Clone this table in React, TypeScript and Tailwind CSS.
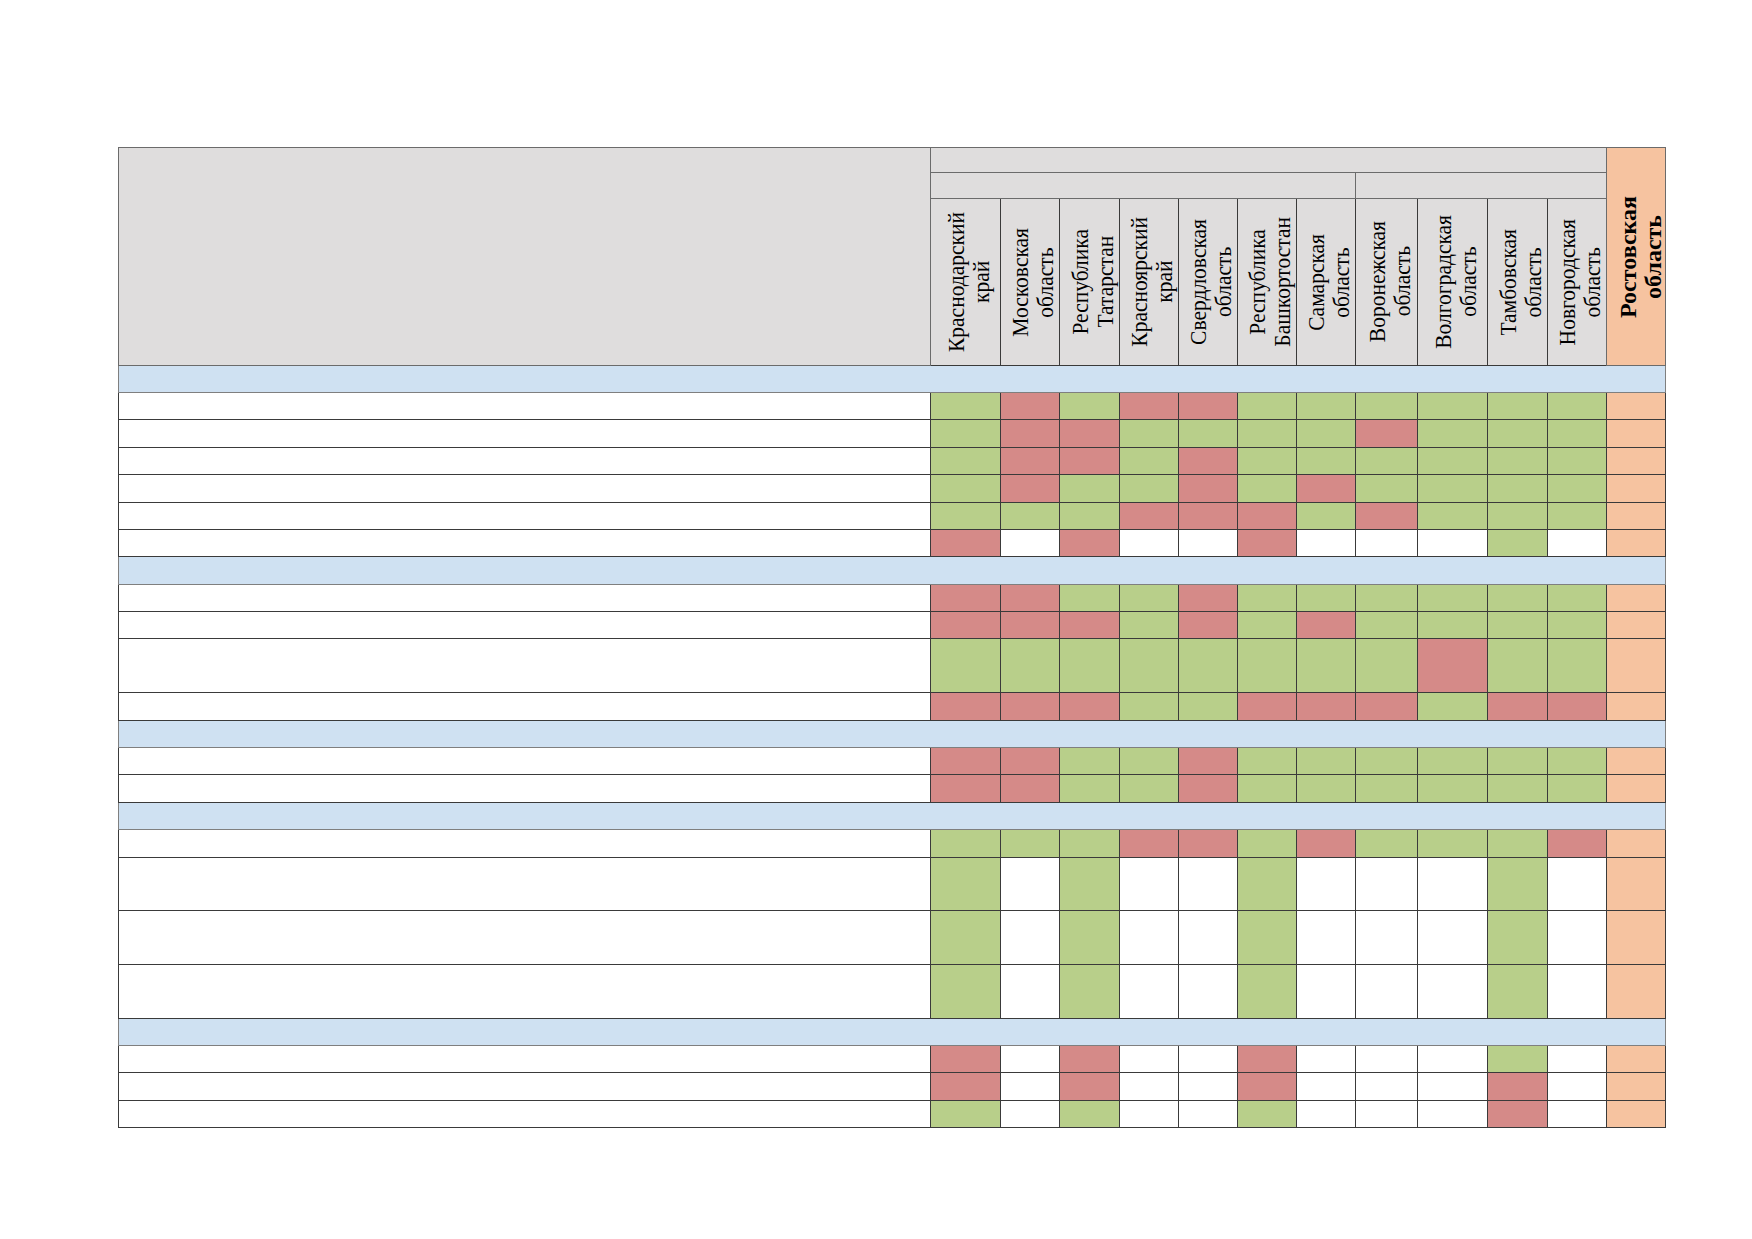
import React from "react"

type Row = { section?: boolean; cells?: string; h: number }

const colWidths = [
  "w-[812px]",
  "w-[70px]",
  "w-[59px]",
  "w-[60px]",
  "w-[59px]",
  "w-[59px]",
  "w-[59px]",
  "w-[59px]",
  "w-[62px]",
  "w-[70px]",
  "w-[60px]",
  "w-[59px]",
  "w-[59px]",
]

const regions = [
  ["Краснодарский", "край"],
  ["Московская", "область"],
  ["Республика", "Татарстан"],
  ["Красноярский", "край"],
  ["Свердловская", "область"],
  ["Республика", "Башкортостан"],
  ["Самарская", "область"],
  ["Воронежская", "область"],
  ["Волгоградская", "область"],
  ["Тамбовская", "область"],
  ["Новгородская", "область"],
]

const fill: Record<string, string> = {
  G: "bg-[#b8cf8a]",
  R: "bg-[#d58a88]",
  W: "bg-white",
}

const heights: Record<number, string> = {
  27: "h-[27px]",
  28: "h-[28px]",
  53: "h-[53px]",
  54: "h-[54px]",
}

const rows: Row[] = [
  { section: true, h: 27 },
  { cells: "GRGRRGGGGGG", h: 27 },
  { cells: "GRRGGGGRGGG", h: 28 },
  { cells: "GRRGRGGGGGG", h: 27 },
  { cells: "GRGGRGRGGGG", h: 28 },
  { cells: "GGGRRRGRGGG", h: 27 },
  { cells: "RWRWWRWWWGW", h: 27 },
  { section: true, h: 28 },
  { cells: "RRGGRGGGGGG", h: 27 },
  { cells: "RRRGRGRGGGG", h: 27 },
  { cells: "GGGGGGGGRGG", h: 54 },
  { cells: "RRRGGRRRGRR", h: 28 },
  { section: true, h: 27 },
  { cells: "RRGGRGGGGGG", h: 27 },
  { cells: "RRGGRGGGGGG", h: 28 },
  { section: true, h: 27 },
  { cells: "GGGRRGRGGGR", h: 28 },
  { cells: "GWGWWGWWWGW", h: 53 },
  { cells: "GWGWWGWWWGW", h: 54 },
  { cells: "GWGWWGWWWGW", h: 54 },
  { section: true, h: 27 },
  { cells: "RWRWWRWWWGW", h: 27 },
  { cells: "RWRWWRWWWRW", h: 28 },
  { cells: "GWGWWGWWWRW", h: 27 },
]

function VerticalLabel({ lines, bold }: { lines: string[]; bold?: boolean }) {
  return (
    <div className="flex items-center justify-center">
      <div
        className={`rotate-180 text-center text-black [writing-mode:vertical-rl] ${
          bold
            ? "translate-x-[5px] text-[24px] leading-[25px] font-bold"
            : "translate-x-[3px] scale-x-[1.06] text-[21.5px] leading-[24px]"
        }`}
      >
        {lines.map((line) => (
          <div key={line}>{line}</div>
        ))}
      </div>
    </div>
  )
}

export default function App() {
  return (
    <div className="min-h-screen bg-white pt-[147px] pl-[118px] font-['Liberation_Serif','Times_New_Roman',serif]">
      <table className="w-[1547px] table-fixed border-collapse">
        <colgroup>
          {colWidths.map((w, i) => (
            <col key={i} className={w} />
          ))}
        </colgroup>
        <thead>
          <tr className="h-[25px]">
            <td rowSpan={3} className="border border-[#6b6b6b] bg-[#dfdddd]"></td>
            <td colSpan={11} className="border border-[#6b6b6b] bg-[#dfdddd]"></td>
            <td rowSpan={3} className="border border-[#6b6b6b] bg-[#f6c3a0] p-0 align-middle">
              <VerticalLabel lines={["Ростовская", "область"]} bold />
            </td>
          </tr>
          <tr className="h-[26px]">
            <td colSpan={7} className="border border-[#6b6b6b] bg-[#dfdddd]"></td>
            <td colSpan={4} className="border border-[#6b6b6b] bg-[#dfdddd]"></td>
          </tr>
          <tr className="h-[167px]">
            {regions.map((lines, i) => (
              <td key={i} className="border border-[#3a3a3a] bg-[#dfdddd] p-0 align-middle">
                <VerticalLabel lines={lines} />
              </td>
            ))}
          </tr>
        </thead>
        <tbody>
          {rows.map((row, i) =>
            row.section ? (
              <tr key={i} className={heights[row.h]}>
                <td colSpan={13} className="border border-[#7f7f7f] bg-[#cfe1f2]"></td>
              </tr>
            ) : (
              <tr key={i} className={heights[row.h]}>
                <td className="border border-[#3a3a3a] bg-white"></td>
                {row.cells!.split("").map((c, j) => (
                  <td key={j} className={`border border-[#3a3a3a] ${fill[c]}`}></td>
                ))}
                <td className="border border-[#3a3a3a] bg-[#f6c3a0]"></td>
              </tr>
            )
          )}
        </tbody>
      </table>
    </div>
  )
}
